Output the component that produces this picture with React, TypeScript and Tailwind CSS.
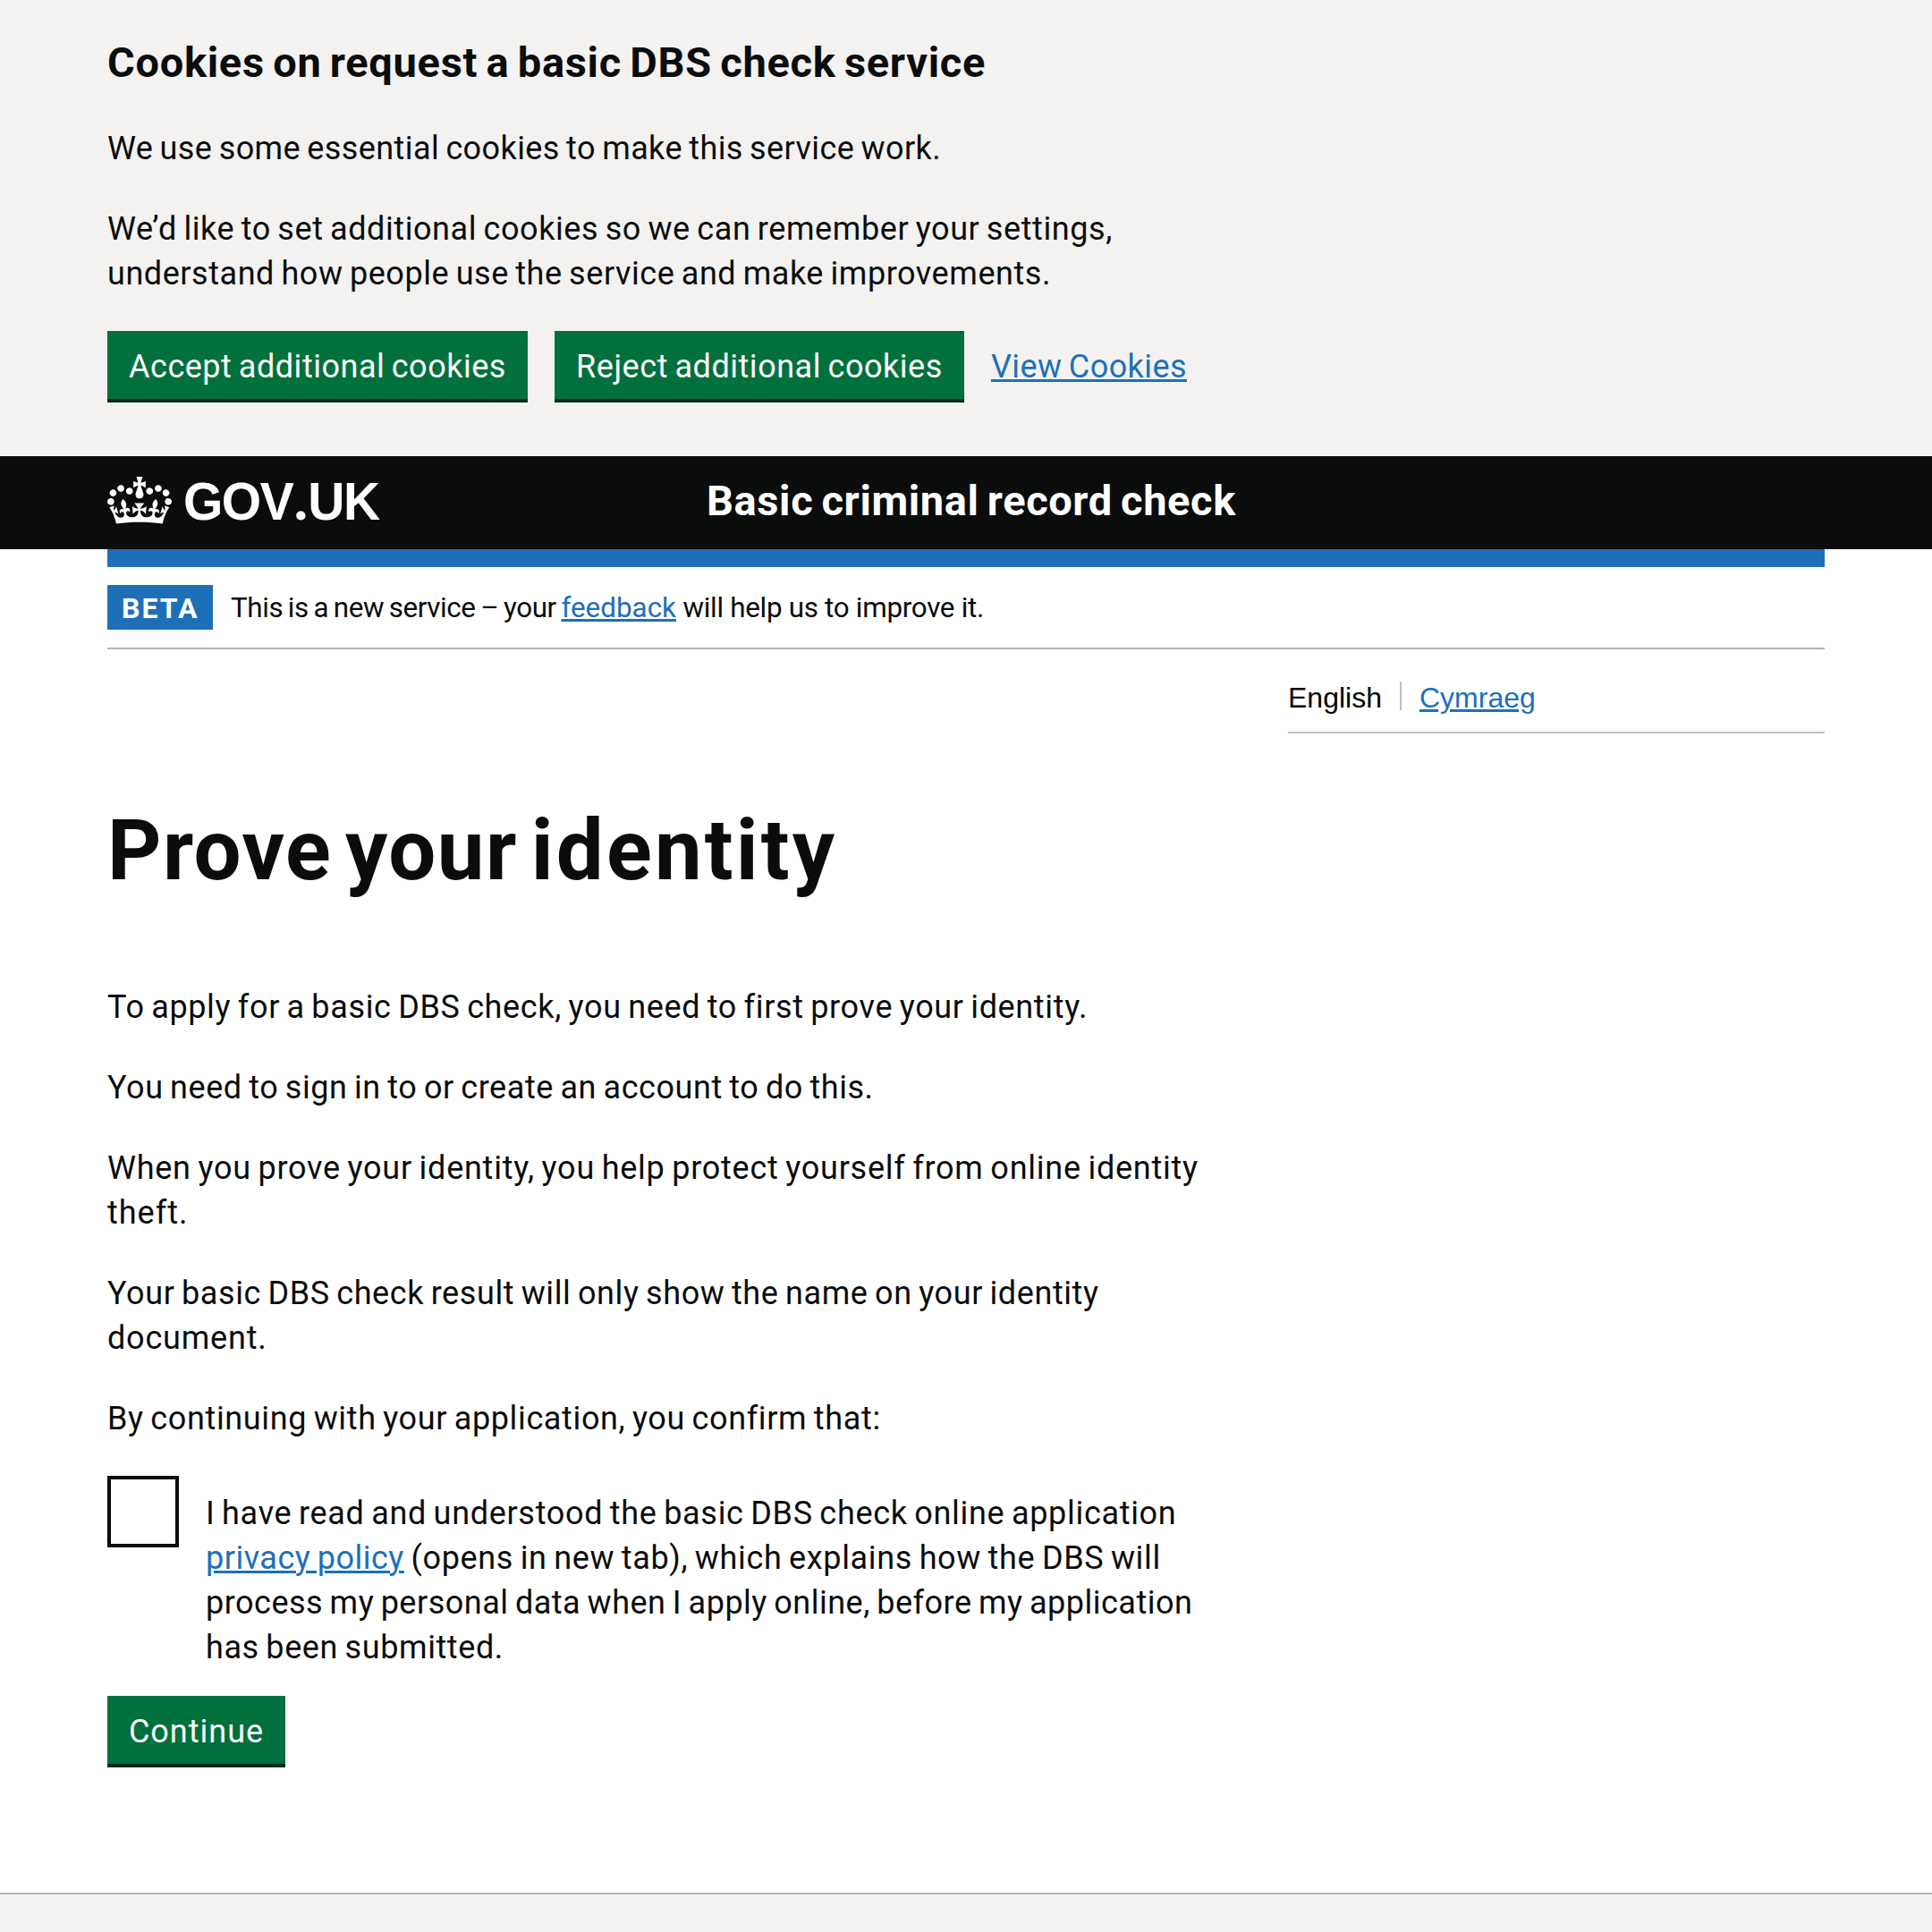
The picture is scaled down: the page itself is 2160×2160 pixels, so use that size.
import React from "react";

type LineProps = { className?: string; children: React.ReactNode };

function Line({ className = "", children }: LineProps) {
  return <span className={`block whitespace-nowrap [word-spacing:-2px] ${className}`}>{children}</span>;
}

function Button({ className = "", children }: LineProps) {
  return (
    <button
      type="button"
      className={`h-20 whitespace-nowrap border-b-4 border-[#002d18] bg-[#00703c] pb-[11px] pt-[15px] text-center text-[36px] leading-[50px] text-white [word-spacing:-2px] ${className}`}
    >
      {children}
    </button>
  );
}

function Link({ className = "", children }: LineProps) {
  return (
    <a
      href="#"
      className={`text-[#1d70b8] underline decoration-[3px] underline-offset-2 ${className}`}
    >
      {children}
    </a>
  );
}

function Crown() {
  return (
    <svg className="mt-[23px] h-[53px] w-[72px] shrink-0" viewBox="0 0 132 97" fill="currentColor" aria-hidden="true">
      <path
        fillRule="evenodd"
        d="M25 30.2c3.5 1.5 7.7-.2 9.1-3.7 1.5-3.6-.2-7.8-3.9-9.2-3.6-1.4-7.6.3-9.1 3.9-1.4 3.5.3 7.5 3.9 9zM9 39.5c3.6 1.5 7.8-.2 9.2-3.7 1.5-3.6-.2-7.8-3.9-9.1-3.6-1.5-7.6.2-9.1 3.8-1.4 3.5.3 7.5 3.8 9zM4.4 57.2c3.5 1.5 7.7-.2 9.1-3.8 1.5-3.6-.2-7.7-3.9-9.1-3.5-1.5-7.6.3-9.1 3.8-1.4 3.5.3 7.6 3.9 9.1zm38.3-21.4c3.5 1.5 7.7-.2 9.1-3.8 1.5-3.6-.2-7.7-3.9-9.1-3.6-1.5-7.6.3-9.1 3.8-1.3 3.6.4 7.7 3.9 9.1zm64.4-5.6c-3.6 1.5-7.8-.2-9.1-3.7-1.5-3.6.2-7.8 3.8-9.2 3.6-1.4 7.7.3 9.2 3.9 1.3 3.5-.4 7.5-3.9 9zm15.9 9.3c-3.6 1.5-7.7-.2-9.1-3.7-1.5-3.6.2-7.8 3.7-9.1 3.6-1.5 7.7.2 9.2 3.8 1.5 3.5-.3 7.5-3.8 9zm4.7 17.7c-3.6 1.5-7.8-.2-9.2-3.8-1.5-3.6.2-7.7 3.9-9.1 3.6-1.5 7.7.3 9.2 3.8 1.3 3.5-.4 7.6-3.9 9.1zM89.3 35.8c-3.6 1.5-7.8-.2-9.2-3.8-1.4-3.6.2-7.7 3.9-9.1 3.6-1.5 7.7.3 9.2 3.8 1.4 3.6-.3 7.7-3.9 9.1zM69.7 17.7l8.9 4.7V9.3l-8.9 2.8c-.2-.3-.5-.6-.9-.9L72.4 0H59.6l3.5 11.2c-.3.3-.6.5-.9.9l-8.8-2.8v13.1l8.8-4.7c.3.3.6.7.9.9l-5 15.4v.1c-.2.8-.4 1.6-.4 2.4 0 4.1 3.1 7.5 7 8.1h.2c.3 0 .7.1 1 .1.4 0 .7 0 1-.1h.2c4-.6 7.1-4.1 7.1-8.1 0-.8-.1-1.7-.4-2.4V34l-5.1-15.4c.4-.2.7-.6 1-.9zM66 92.8c16.9 0 32.8 1.1 47.1 3.2 4-16.9 8.9-26.7 14-33.5l-9.6-3.4c1 4.9 1.1 7.2 0 10.2-1.5-1.4-3-4.3-4.2-8.7L108.6 76c2.8-2 5-3.2 7.5-3.3-4.4 9.4-10 11.9-13.6 11.2-4.3-.8-6.3-4.6-5.6-7.9 1-4.7 5.7-5.9 8-.5 4.3-8.7-3-11.4-7.6-8.8 7.1-7.2 7.9-13.5 2.1-21.1-8 6.1-8.1 12.3-4.5 20.8-4.7-5.4-12.1-2.5-9.5 6.2 3.4-5.2 7.9-2 7.2 3.1-.6 4.3-6.4 7.8-13.5 7.2-10.3-.9-10.9-8-11.2-13.8 2.5-.5 7.1 1.8 11 7.3L80.2 60c-4.1 4.4-8 5.3-12.3 5.4 1.4-4.4 8-11.6 8-11.6H55.5s6.4 7.2 7.9 11.6c-4.2-.1-8-1-12.3-5.4l1.4 16.4c3.9-5.5 8.5-7.7 10.9-7.3-.3 5.8-.9 12.8-11.1 13.8-7.2.6-12.9-2.9-13.5-7.2-.7-5 3.8-8.3 7.1-3.1 2.7-8.7-4.6-11.6-9.4-6.2 3.7-8.5 3.6-14.7-4.6-20.8-5.8 7.6-5 13.9 2.2 21.1-4.7-2.6-11.9.1-7.7 8.8 2.3-5.5 7.1-4.2 8.1.5.7 3.3-1.3 7.1-5.7 7.9-3.5.7-9-1.8-13.5-11.2 2.5.1 4.7 1.3 7.5 3.3l-4.7-15.4c-1.2 4.4-2.7 7.2-4.3 8.7-1.1-3-.9-5.3 0-10.2l-9.5 3.4c5 6.9 9.9 16.7 14 33.5 14.8-2.1 30.8-3.2 47.7-3.2z"
      />
    </svg>
  );
}

function CookieBanner() {
  return (
    <section className="h-[510px] bg-[#f3f2f1] px-[120px] pt-10">
      <h2 className="whitespace-nowrap text-[47px] font-bold leading-[60px] tracking-[0.7px] [word-spacing:-3px]">
        Cookies on request a basic DBS check service
      </h2>
      <div className="mt-[41px] flex flex-col gap-10 text-[36px] leading-[50px]">
        <p>
          <Line className="tracking-[0.4px]">We use some essential cookies to make this service work.</Line>
        </p>
        <p>
          <Line className="tracking-[0.58px]">
            We’d like to set additional cookies so we can remember your settings,
          </Line>
          <Line className="tracking-[0.55px]">
            understand how people use the service and make improvements.
          </Line>
        </p>
        <div className="-mt-px flex items-start">
          <Button className="w-[470px] tracking-[0.52px]">Accept additional cookies</Button>
          <Button className="ml-[30px] w-[458px] tracking-[0.54px]">Reject additional cookies</Button>
          <Link className="ml-[30px] mt-[15px] whitespace-nowrap tracking-[0.42px] [word-spacing:-2px]">
            View Cookies
          </Link>
        </div>
      </div>
    </section>
  );
}

function Header() {
  return (
    <header className="h-[104px] bg-[#0b0c0c] px-[120px] text-white">
      <div className="flex h-full items-start">
        <div className="flex w-[670px] items-start">
          <Crown />
          <span className="ml-[13px] mt-3.5 origin-left scale-x-95 whitespace-nowrap font-['Liberation_Sans',Arial,sans-serif] text-[60px] font-bold leading-[70px] tracking-[-1.6px]">
            GOV<span className="font-[Roboto,sans-serif] text-[68px] leading-none">.</span>UK
          </span>
        </div>
        <span className="mt-5 whitespace-nowrap text-[47px] font-bold leading-[60px] tracking-[0.6px] [word-spacing:-3px]">
          Basic criminal record check
        </span>
      </div>
    </header>
  );
}

function PhaseBanner() {
  return (
    <div className="flex h-[92px] items-start border-b-2 border-[#b1b4b6] pt-5">
      <strong className="h-[50px] w-[118px] bg-[#1d70b8] pl-4 text-[32px] leading-[52px] tracking-[2px] text-white">
        BETA
      </strong>
      <span className="ml-5 whitespace-pre text-[31.4px] leading-[52px]">
        <span className="tracking-[-0.4px] [word-spacing:-1.8px]">This is a new service – your </span>
        <Link className="[text-decoration-skip-ink:none]">feedback</Link>
        <span className="tracking-[-0.3px]"> will help us to improve it.</span>
      </span>
    </div>
  );
}

function LanguageSelect() {
  return (
    <nav className="ml-auto flex h-[94px] w-[600px] items-start border-b-2 border-[#bfc1c3] pt-9 font-['Liberation_Sans',Arial,sans-serif] text-[32px] leading-[36px]">
      <span className="mr-5 text-black">English</span>
      <span className="h-8 w-[2px] bg-[#bfc1c3]" />
      <Link className="ml-5">Cymraeg</Link>
    </nav>
  );
}

export default function App() {
  return (
    <div className="flex h-[2160px] w-[2160px] flex-col overflow-hidden bg-white font-[Roboto,Arial,sans-serif] text-[#0b0c0c]">
      <CookieBanner />
      <Header />
      <div className="px-[120px]">
        <div className="h-5 bg-[#1d70b8]" />
        <PhaseBanner />
        <LanguageSelect />
        <main className="h-[1296px] pt-[81px] text-[36px] leading-[50px]">
          <h1 className="text-[94px] font-bold leading-[100px] tracking-[1.5px] [word-spacing:-10px]">
            Prove your <span className="tracking-[3.2px]">identity</span>
          </h1>
          <div className="mt-[100px] flex flex-col gap-10">
            <p>
              <Line className="tracking-[0.65px]">
                To apply for a basic DBS check, you need to first prove your identity.
              </Line>
            </p>
            <p>
              <Line className="tracking-[0.57px]">You need to sign in to or create an account to do this.</Line>
            </p>
            <p>
              <Line className="tracking-[0.75px]">
                When you prove your identity, you help protect yourself from online identity
              </Line>
              <Line className="tracking-[1px]">theft.</Line>
            </p>
            <p>
              <Line className="tracking-[0.6px]">
                Your basic DBS check result will only show the name on your identity
              </Line>
              <Line className="tracking-[0.8px]">document.</Line>
            </p>
            <p>
              <Line className="tracking-[0.64px]">By continuing with your application, you confirm that:</Line>
            </p>
            <label className="-mt-px flex items-start">
              <input
                type="checkbox"
                className="size-20 shrink-0 appearance-none border-4 border-[#0b0c0c] bg-white"
              />
              <span className="ml-[30px] mt-[17px]">
                <Line className="tracking-[0.69px]">
                  I have read and understood the basic DBS check online application
                </Line>
                <Line className="tracking-[0.66px]">
                  <Link className="tracking-[0.5px]">privacy policy</Link> (opens in new tab), which explains how the DBS will
                </Line>
                <Line className="tracking-[0.5px]">
                  process my personal data when I apply online, before my application
                </Line>
                <Line className="tracking-[0.6px]">has been submitted.</Line>
              </span>
            </label>
          </div>
          <Button className="mt-[29px] block w-[199px] tracking-[1px]">Continue</Button>
        </main>
      </div>
      <footer className="flex-1 border-t-2 border-[#b1b4b6] bg-[#f3f2f1]" />
    </div>
  );
}
